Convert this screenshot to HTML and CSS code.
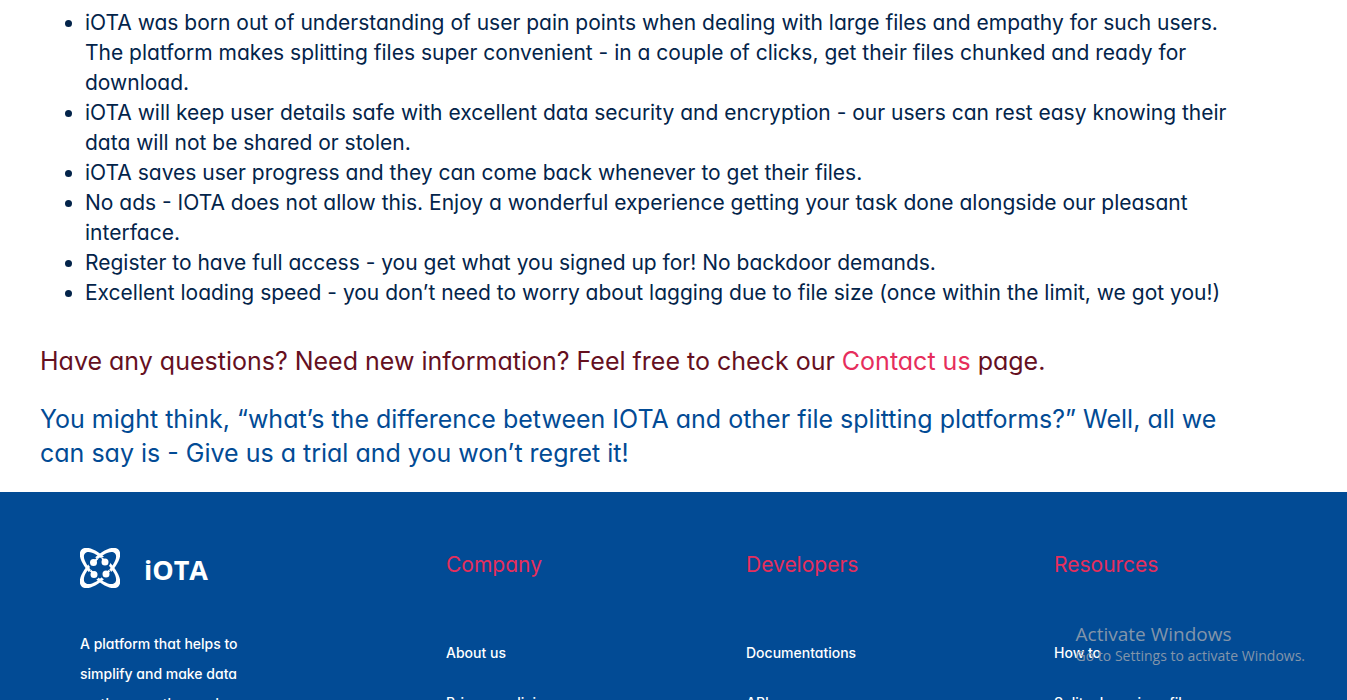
FILE: index.html
```html
<!DOCTYPE html>
<html lang="en">
<head>
<meta charset="utf-8">
<title>iOTA - About us</title>
<link rel="stylesheet" href="styles.css">
</head>
<body>
<main class="content">
  <ul class="reasons">
    <li>iOTA was born out of understanding of user pain points when dealing with large files and empathy for such users.<br>The platform makes splitting files super convenient - in a couple of clicks, get their files chunked and ready for<br>download.</li>
    <li>iOTA will keep user details safe with excellent data security and encryption - our users can rest easy knowing their<br>data will not be shared or stolen.</li>
    <li>iOTA saves user progress and they can come back whenever to get their files.</li>
    <li>No ads - IOTA does not allow this. Enjoy a wonderful experience getting your task done alongside our pleasant<br>interface.</li>
    <li>Register to have full access - you get what you signed up for! No backdoor demands.</li>
    <li>Excellent loading speed - you don’t need to worry about lagging due to file size (once within the limit, we got you!)</li>
  </ul>
  <p class="lead questions">Have any questions? Need new information? Feel free to check our <a href="#contact">Contact us</a> page.</p>
  <p class="lead closing">You might think, “what’s the difference between IOTA and other file splitting platforms?” Well, all we<br>can say is - Give us a trial and you won’t regret it!</p>
</main>
<footer class="footer">
  <section class="brand">
    <div class="logo">
      <svg class="logo-mark" viewBox="0 0 40 40" aria-hidden="true">
        <g fill="#fff" fill-rule="evenodd">
          <path transform="rotate(45 20 20)" d="M-6 20C-6 13 6 9 20 9S46 13 46 20S34 31 20 31S-6 27 -6 20ZM-1 20C-1 25 8 28 20 28S41 25 41 20S32 12 20 12S-1 15 -1 20Z"/>
          <path transform="rotate(-45 20 20)" d="M-6 20C-6 13 6 9 20 9S46 13 46 20S34 31 20 31S-6 27 -6 20ZM-1 20C-1 25 8 28 20 28S41 25 41 20S32 12 20 12S-1 15 -1 20Z"/>
        </g>
        <g fill="#fff" stroke="#024b95" stroke-width="2">
          <circle cx="13.5" cy="14.5" r="4.5"/><circle cx="25" cy="14" r="4.5"/><circle cx="14" cy="26.5" r="4.5"/><circle cx="26" cy="26" r="4.5"/>
        </g>
        <path d="M14 14L17.500 10.500M25 14L22 10M14 26L10.500 22.500M26 26L29.500 22.500" stroke="#fff" stroke-width="2"/>
      </svg>
      <span class="logo-name">iOTA</span>
    </div>
    <p class="tagline">A platform that helps to<br>simplify and make data<br>on the smoother and</p>
  </section>
  <nav class="links" aria-label="Company">
    <h2>Company</h2>
    <a href="#about">About us</a>
    <a href="#privacy">Privacy policies</a>
  </nav>
  <nav class="links" aria-label="Developers">
    <h2>Developers</h2>
    <a href="#docs">Documentations</a>
    <a href="#api">API</a>
  </nav>
  <nav class="links" aria-label="Resources">
    <h2>Resources</h2>
    <a href="#how">How to</a>
    <a href="#split">Split a large json file</a>
  </nav>
</footer>
<aside class="activation">
  <p class="activation-title">Activate Windows</p>
  <p class="activation-text">Go to Settings to activate Windows.</p>
</aside>
</body>
</html>
```
FILE: styles.css
```css
* { box-sizing: border-box; }
body {
  margin: 0;
  height: 100vh;
  overflow: hidden;
  background: #fff;
  color: #03244a;
  font-family: Inter, "Liberation Sans", sans-serif;
  font-feature-settings: "cv11";
}
.content { padding: 8px 40px 22px; }
.reasons {
  margin: 0 0 36px;
  padding-left: 45px;
  font-size: 21px;
  line-height: 30px;
}
.lead { margin: 0; font-size: 25px; line-height: 34px; }
.questions { color: #65101f; margin-bottom: 24px; }
.questions a { color: #e62e5c; text-decoration: none; }
.closing { color: #024b95; }
.footer {
  display: grid;
  grid-template-columns: 366fr 300fr 308fr 213fr;
  padding: 56px 80px;
  background: #024b95;
  color: #fff;
  font-size: 14px;
  font-weight: 500;
}
.logo { display: flex; align-items: center; gap: 24px; height: 40px; }
.logo-mark { width: 40px; height: 40px; }
.logo-name { font: 700 27px/44px "Open Sans", sans-serif; padding-top: 4px; }
.tagline { margin: 41px 0 0; line-height: 30px; }
.links { display: flex; flex-direction: column; align-items: flex-start; }
.links h2 {
  margin: 0 0 61px;
  color: #e62e5c;
  font-size: 21px;
  font-weight: 400;
  line-height: 34px;
}
.links a { color: #fff; text-decoration: none; line-height: 20px; margin-bottom: 30px; }
.activation {
  position: absolute;
  right: 42px;
  bottom: 34px;
  color: #8295aa;
  font-family: "Open Sans", sans-serif;
  font-feature-settings: normal;
  pointer-events: none;
}
.activation p { margin: 0; }
.activation-title { font-size: 19px; line-height: 24px; }
.activation-text { font-size: 14px; line-height: 20px; }
```
